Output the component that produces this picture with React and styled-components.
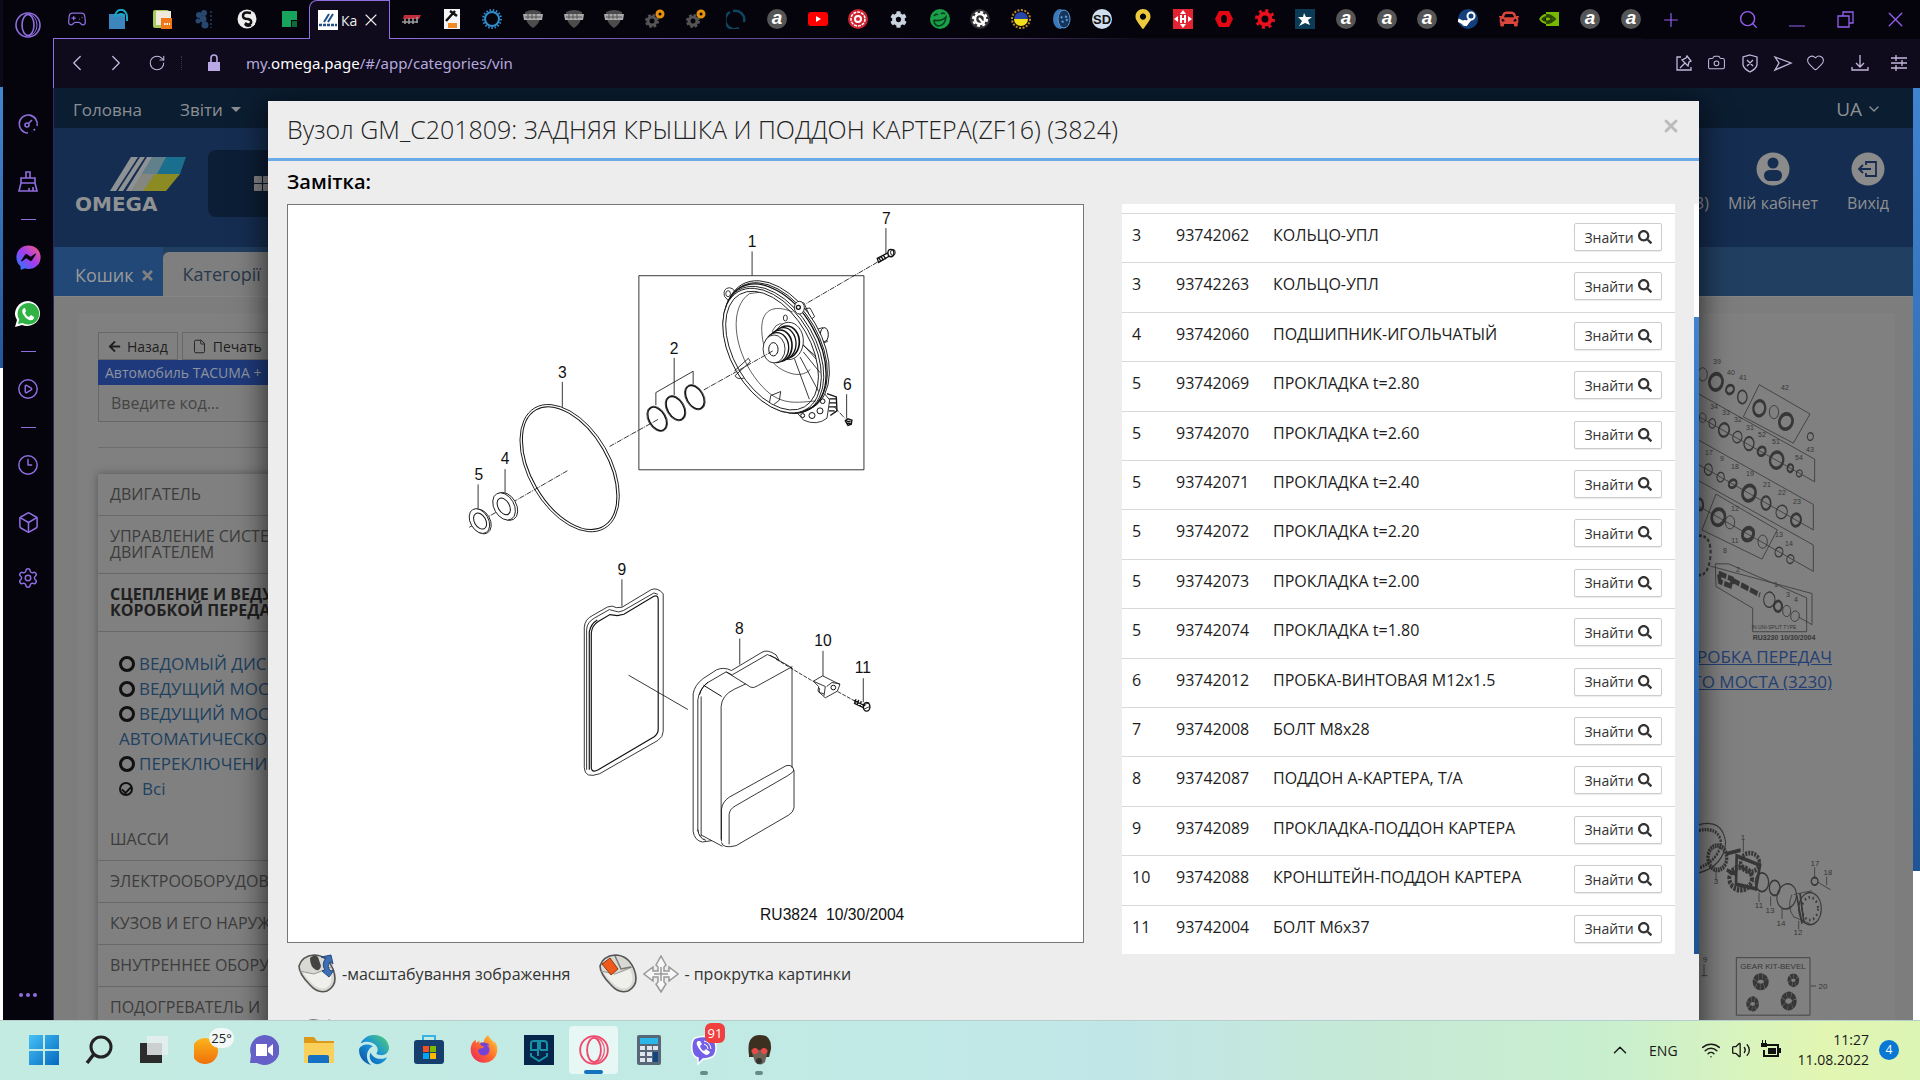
import styled, { createGlobalStyle, css } from "styled-components";
import {
  Box,
  Camera,
  ChevronDown,
  ChevronLeft,
  ChevronRight,
  ChevronUp,
  Clock3,
  File,
  Gamepad2,
  Heart,
  Plus,
  RotateCw,
  Search,
  Settings,
  CirclePlay,
  Volume2,
  Wifi,
  X,
} from "lucide-react";
import {
  FaArrowLeft,
  FaCar,
  FaCog,
  FaFacebookMessenger,
  FaMapMarkerAlt,
  FaSearch,
  FaThLarge,
  FaTimes,
} from "react-icons/fa";
import { FaEdge, FaFirefoxBrowser } from "react-icons/fa6";

const purple = "#8f6ee0";

const GlobalStyle = createGlobalStyle`
  * {
    box-sizing: border-box;
  }

  body {
    margin: 0;
    overflow: hidden;
    font-family: "Open Sans", "Noto Sans", sans-serif;
    font-size: 16px;
    background: #05030c;
  }

  button, input {
    font-family: inherit;
  }

  button {
    margin: 0;
    padding: 0;
    border: 0;
    background: none;
    color: inherit;
  }

  svg {
    display: block;
    flex: none;
  }
`;

const Desktop = styled.div`
  height: 100vh;
  display: flex;
  flex-direction: column;
`;

const Browser = styled.div`
  flex: 1;
  min-height: 0;
  display: flex;
`;

const DesktopEdge = styled.div`
  width: 3px;
  background: linear-gradient(#0b0a18 87px, #4187d0 87px, #23569a 368px, #fff 368px);
`;

const SideBar = styled.nav`
  width: 50px;
  display: flex;
  flex-direction: column;
  align-items: center;
  background: #05030c;
  color: ${purple};
`;

const SideItem = styled.button`
  height: ${(p) => p.$h || 58}px;
  width: 50px;
  display: flex;
  align-items: center;
  justify-content: center;
`;

const SideGap = styled.div`
  height: 45px;
`;

const SideDash = styled.div`
  height: 18px;
  width: 15px;
  display: flex;
  align-items: center;

  &::before {
    content: "";
    flex: 1;
    height: 1px;
    background: ${purple};
  }
`;

const SideDots = styled.button`
  margin-top: auto;
  height: 50px;
  display: flex;
  align-items: center;
  gap: 3px;

  i {
    width: 4px;
    height: 4px;
    border-radius: 50%;
    background: ${purple};
  }
`;

const Main = styled.div`
  flex: 1;
  min-width: 0;
  display: flex;
  flex-direction: column;
`;

const TabStrip = styled.div`
  height: 39px;
  display: flex;
  align-items: stretch;
  background: #05030c;
`;

const TabGroup = styled.div`
  display: flex;
  align-items: center;
  justify-content: space-between;
  border-bottom: 1px solid ${purple};
  ${(p) =>
    p.$grow
      ? css`
          flex: 1;
          padding: 0 0 0 10px;
          border-image: linear-gradient(90deg, ${purple}, #43345c 50%, #0d0a18 60%) 1;
        `
      : css`
          width: 256px;
          padding: 0 9px 0 13px;
        `}
`;

const Favicon = styled.button`
  width: 22px;
  height: 26px;
  display: flex;
  align-items: center;
  justify-content: center;
  color: ${purple};
`;

const ActiveTab = styled.div`
  width: 81px;
  display: flex;
  align-items: center;
  padding-left: 8px;
  gap: 3px;
  border: 1px solid ${purple};
  border-bottom: 0;
  border-top-left-radius: 8px;
  background: #0f0b1c;
  color: #eee;
  font-size: 14px;
`;

const TabTitle = styled.span`
  width: 17px;
`;

const WindowButtons = styled.div`
  width: 278px;
  display: flex;
  align-items: center;
  color: #9560f0;
  padding-left: 17px;
`;

const WindowButton = styled.button`
  width: 50px;
  display: flex;
  justify-content: center;
  &:first-child {
    width: 24px;
    margin-right: 41px;
  }
`;

const AddressBar = styled.div`
  height: 49px;
  display: flex;
  align-items: center;
  padding: 0 10px 2px 14px;
  background: #0f0b1c;
  border-left: 1px solid ${purple};
  color: #c3b9dd;
`;

const BarButton = styled.button`
  width: ${(p) => p.$w || 33}px;
  display: flex;
  justify-content: center;
`;

const BarDivider = styled.div`
  width: 14px;
  height: 14px;
  border-right: 1px dotted #3a3350;
`;

const Url = styled.div`
  flex: 1;
  font-family: "Noto Sans", sans-serif;
  font-size: 15px;
  color: #b6a9dd;

  b {
    font-weight: 400;
    color: #fff;
  }
`;

const Viewport = styled.div`
  position: relative;
  flex: 1;
  min-height: 0;
  display: flex;
  overflow: hidden;
  border-left: 1px solid #35255e;
`;

const Page = styled.div`
  flex: 1;
  min-width: 0;
  background: #7d7d7d;
`;

const PageScroll = styled.div`
  width: 7px;
  background: linear-gradient(#4083cf, #1f5597 84%, #fff 84%);
`;

const TopNav = styled.nav`
  height: 40px;
  display: flex;
  align-items: center;
  gap: 38px;
  padding: 2px 31px 0 19px;
  background: #0b1d31;
  color: #8b8f94;
  font-size: 17px;

  a {
    display: flex;
    align-items: center;
    gap: 8px;
    color: inherit;
    text-decoration: none;
  }
`;

const Language = styled.a`
  && {
    margin-left: auto;
    gap: 4px;
    font-size: 19px;
  }
`;

const Caret = styled.i`
  border: 5px solid transparent;
  border-top-color: currentColor;
  border-bottom: 0;
`;

const Header = styled.header`
  height: 119px;
  display: flex;
  align-items: flex-start;
  padding: 22px 14px 0 21px;
  background: #152d50;
  color: #909090;
`;

const Logo = styled.a`
  padding-top: 6px;
`;

const CatalogButton = styled.button`
  width: 200px;
  height: 67px;
  margin-left: 20px;
  padding-left: 46px;
  border-radius: 8px;
  background: #0c1e36;
  color: #858585;
`;

const HeaderLinks = styled.div`
  margin-left: auto;
  display: flex;
  gap: 19px;
`;

const HeaderLink = styled.a`
  min-width: 62px;
  display: flex;
  flex-direction: column;
  align-items: center;
  gap: 6px;
  padding-top: 2px;
  color: inherit;
  font-size: 16px;
  text-decoration: none;
`;

const PageTabs = styled.div`
  height: 50px;
  display: flex;
  align-items: flex-end;
  background: #213f61;
  border-bottom: 1px solid #858585;
`;

const PageTab = styled.a`
  height: ${(p) => (p.$active ? 44 : 49)}px;
  display: flex;
  align-items: center;
  gap: 6px;
  padding: ${(p) => (p.$active ? "0 20px" : "7px 8px 0 21px")};
  border-top-left-radius: ${(p) => (p.$active ? 6 : 0)}px;
  background: ${(p) => (p.$active ? "#7f7f7f" : "#214876")};
  color: ${(p) => (p.$active ? "#29384b" : "#9a9a9a")};
  font-size: 18px;
  text-decoration: none;

  svg {
    color: #808080;
  }
`;

const PageBody = styled.div`
  height: 1000px;
  display: flex;
  justify-content: space-between;
  margin: 16px 18px 0 24px;
  padding: 19px 0 0 20px;
  background: #808080;
`;

const Filters = styled.aside`
  width: 300px;
`;

const FilterButtons = styled.div`
  display: flex;
  gap: 4px;
`;

const SmallButton = styled.button`
  height: 28px;
  display: flex;
  align-items: center;
  gap: 6px;
  padding: 0 9px;
  border: 1px solid #676767;
  color: #202020;
  font-size: 14px;
`;

const CarBadge = styled.div`
  height: 25px;
  padding: 0 7px;
  background: #1f3a7c;
  color: #8d939f;
  font-size: 14px;
  line-height: 25px;
  white-space: nowrap;
`;

const CodeInput = styled.input`
  width: 100%;
  height: 37px;
  display: block;
  padding: 0 12px;
  border: 1px solid #676767;
  border-top: 0;
  background: #7f7f7f;
  font-size: 16px;

  &::placeholder {
    color: #444;
  }
`;

const Rule = styled.hr`
  margin: 25px 0 26px;
  border: 0;
  border-top: 1px solid #6d6d6d;
`;

const Accordion = styled.div`
  box-shadow: 0 0 8px rgba(0, 0, 0, 0.35);
  background: #808080;
`;

const AccordionItem = styled.button`
  width: 100%;
  display: block;
  padding: 12px 12px 13px;
  border-bottom: 1px solid #686868;
  color: ${(p) => (p.$open ? "#202020" : "#3c3c3c")};
  font-size: 16px;
  font-weight: ${(p) => (p.$open ? 700 : 400)};
  line-height: 16px;
  text-align: left;
  white-space: pre;
`;

const SubList = styled.div`
  height: 187px;
  padding: 19px 0 0 21px;
`;

const SubItem = styled.label`
  display: block;
  color: #20405f;
  font-size: 17px;
  line-height: 25px;
  white-space: pre;
`;

const Radio = styled.input`
  appearance: none;
  width: 16px;
  height: 16px;
  margin: 0 4px 0 0;
  border: 3px solid #111;
  border-radius: 50%;
  vertical-align: -2px;

  &:checked {
    width: 14px;
    height: 14px;
    margin-right: 9px;
    border-width: 2px;
    vertical-align: -1px;
  }

  &:checked::after {
    content: "";
    display: block;
    width: 7px;
    height: 4px;
    margin: 2px 1px;
    border-left: 2px solid #111;
    border-bottom: 2px solid #111;
    transform: rotate(-45deg);
  }
`;

const Gallery = styled.div`
  width: 400px;
  padding: 15px 63px 0 0;
  display: flex;
  flex-direction: column;
  align-items: flex-end;
  gap: 110px;
`;

const NodeCard = styled.a`
  display: flex;
  flex-direction: column;
  align-items: flex-end;
  color: #243f73;
  font-size: 17px;
  line-height: 25px;
  text-align: right;

  svg {
    color: #2b2b2b;
    opacity: 0.85;
  }
`;

const Modal = styled.section`
  position: absolute;
  top: 13px;
  left: 214px;
  right: 221px;
  bottom: 0;
  overflow: hidden;
  display: flex;
  flex-direction: column;
  background: #ededed;
`;

const ModalShade = styled.div`
  position: absolute;
  top: 13px;
  left: 214px;
  right: 221px;
  bottom: -40px;
  box-shadow: 0 5px 30px rgba(0, 0, 0, 0.75);
`;

const ModalHeader = styled.header`
  flex: none;
  height: 60px;
  display: flex;
  justify-content: space-between;
  padding: 11px 18px 0 19px;
  border-bottom: 3px solid #6aaae8;
`;

const ModalTitle = styled.h2`
  margin: 0;
  color: #222;
  font-size: 25px;
  font-weight: 300;
  line-height: 35px;
`;

const CloseButton = styled.button`
  height: 28px;
  color: #bbb;
`;

const ModalBody = styled.div`
  flex: 1;
  display: grid;
  grid-template-columns: 797px 1fr;
  gap: 0 38px;
  align-content: start;
  padding: 7px 0 0 19px;
`;

const Note = styled.strong`
  grid-column: 1 / -1;
  height: 36px;
  font-size: 20px;
  font-weight: 600;
  line-height: 28px;
`;

const Drawing = styled.div`
  height: 739px;
  border: 1px solid #777;
  background: #fff;
`;

const PartsPane = styled.div`
  height: 750px;
  display: flex;
  align-items: flex-end;
  justify-content: space-between;
`;

const PartsScroll = styled.div`
  width: 5px;
  height: 100%;
  background: linear-gradient(#fff 113px, #4083cf 113px, #1d5294);
`;

const PartsList = styled.div`
  flex: 1;
  margin-right: 19px;
  padding-top: 9px;
  background: #fff;
`;

const PartsTable = styled.table`
  width: 100%;
  height: 741px;
  border-collapse: collapse;
  color: #1d1d1d;

  td {
    padding: 9px 0 0 10px;
    border-top: 1px solid #d8d8d8;
    font-size: 16px;
    line-height: 24px;
    vertical-align: top;
  }

  td:nth-child(1) {
    width: 44px;
  }

  td:nth-child(2) {
    width: 97px;
  }

  td:last-child {
    width: 111px;
  }
`;

const FindButton = styled.button`
  width: 88px;
  height: 28px;
  display: flex;
  align-items: center;
  justify-content: center;
  gap: 4px;
  border: 1px solid #ccc;
  border-radius: 2px;
  background: #fff;
  color: #333;
  font-size: 14px;
  box-shadow: 0 1px 1px rgba(0, 0, 0, 0.08);
`;

const Hints = styled.div`
  grid-column: 1 / -1;
  display: flex;
  align-items: center;
  padding: 0 0 1px 11px;
  color: #333;
  font-size: 16px;
`;

const Hint = styled.div`
  display: flex;
  align-items: center;
  gap: 5px;
  margin-right: 29px;
  line-height: 22px;
`;

const HintRow = styled.div`
  grid-column: 1 / -1;
  padding: 24px 0 0 10px;
`;

const TaskBar = styled.footer`
  height: 60px;
  display: flex;
  align-items: center;
  padding: 0 21px 1px 19px;
  border-top: 1px solid #b4cfcc;
  background: linear-gradient(
    90deg,
    #c4ebe1,
    #c1eae6 45%,
    #c1e6e8 58%,
    #c6e9d5 72%,
    #c9efcf 84%,
    #e2f6b2 95%,
    #dcf4b4
  );
  color: #1a1a1a;
`;

const TaskButton = styled.button`
  position: relative;
  width: 49px;
  height: 48px;
  margin-right: 6px;
  display: flex;
  align-items: center;
  justify-content: center;
  border-radius: 4px;
  background: ${(p) => (p.$active ? "rgba(255, 255, 255, .6)" : "none")};

  &::after {
    content: "";
    position: absolute;
    bottom: ${(p) => (p.$active ? 0 : -1)}px;
    width: ${(p) => (p.$active ? 19 : p.$running ? 8 : 0)}px;
    height: 4px;
    border-radius: 2px;
    background: ${(p) => (p.$active ? "#1572bd" : "#668b88")};
  }
`;

const TaskBadge = styled.span`
  position: absolute;
  top: ${(p) => (p.$red ? -3 : 2)}px;
  right: ${(p) => (p.$red ? 3 : -1)}px;
  width: ${(p) => (p.$red ? 20 : 25)}px;
  height: 20px;
  border-radius: ${(p) => (p.$red ? 6 : 10)}px;
  background: ${(p) => (p.$red ? "#f04040" : "#f2f8f7")};
  color: ${(p) => (p.$red ? "#fff" : "#222")};
  font-size: 13px;
  line-height: 20px;
`;

const Tray = styled.div`
  margin-left: auto;
  display: flex;
  align-items: center;
  gap: 10px;
  font-size: 14px;
`;

const Lang = styled.span`
  margin: 0 13px 0 8px;
`;

const ClockText = styled.div`
  margin-left: 7px;
  line-height: 20px;
  text-align: right;
`;

const Count = styled.span`
  width: 20px;
  height: 20px;
  border-radius: 50%;
  background: #0878d4;
  color: #fff;
  font-size: 12px;
  line-height: 20px;
  text-align: center;
`;

const Defs = styled.svg`
  position: absolute;
`;

const parts = [
  [3, "93742062", "КОЛЬЦО-УПЛ"],
  [3, "93742263", "КОЛЬЦО-УПЛ"],
  [4, "93742060", "ПОДШИПНИК-ИГОЛЬЧАТЫЙ"],
  [5, "93742069", "ПРОКЛАДКА t=2.80"],
  [5, "93742070", "ПРОКЛАДКА t=2.60"],
  [5, "93742071", "ПРОКЛАДКА t=2.40"],
  [5, "93742072", "ПРОКЛАДКА t=2.20"],
  [5, "93742073", "ПРОКЛАДКА t=2.00"],
  [5, "93742074", "ПРОКЛАДКА t=1.80"],
  [6, "93742012", "ПРОБКА-ВИНТОВАЯ M12x1.5"],
  [7, "93742008", "БОЛТ M8x28"],
  [8, "93742087", "ПОДДОН А-КАРТЕРА, Т/А"],
  [9, "93742089", "ПРОКЛАДКА-ПОДДОН КАРТЕРА"],
  [10, "93742088", "КРОНШТЕЙН-ПОДДОН КАРТЕРА"],
  [11, "93742004", "БОЛТ M6x37"],
];

const OperaIcon = ({ size = 26, color = purple }) => (
  <svg width={size} height={size} viewBox="0 0 26 26" fill="none" stroke={color}>
    <ellipse cx="13" cy="13" rx="12" ry="12" strokeWidth="1.6" />
    <ellipse cx="13" cy="13" rx="6" ry="10.5" strokeWidth="1.6" />
    <path d="M14 2.5a8 10.500 0 0 1 0 21" />
  </svg>
);

const GaugeIcon = () => (
  <svg width="22" height="22" viewBox="0 0 22 22" fill="none" stroke={purple} strokeWidth="1.6">
    <path d="M11 20A9 9 0 1 1 20 13" />
    <path d="M18 16l-3 3" strokeDasharray="2 2" />
    <circle cx="10" cy="12" r="2" />
    <path d="M11 11l4-4" />
  </svg>
);

const BroomIcon = () => (
  <svg width="22" height="22" viewBox="0 0 22 22" fill="none" stroke={purple} strokeWidth="1.6">
    <path d="M9 7V1h4v6M4 7h14v5H4zM4 12l-2 8h18l-2-8M12 20v-3M16 20v-4" />
  </svg>
);

const WhatsAppIcon = () => (
  <svg width="26" height="26" viewBox="0 0 26 26">
    <path d="M13 0a13 12.500 0 1 1-6 24L0 26l2-7A13 12.500 0 0 1 13 0z" fill="#fff" />
    <path d="M13 2a11 10.800 0 1 1-5.500 20L3 23l1.200-4.500A11 10.800 0 0 1 13 2z" fill="#2fb344" />
    <path d="M9 7q-3 2-1 6t6 6q4 1 5-2v-1l-3-2-2 2q-3-1-4-4l1-2-1-3z" fill="#fff" />
  </svg>
);

const ViberIcon = () => (
  <svg width="28" height="30" viewBox="0 0 28 30">
    <path d="M5 3Q14 0 22 3q4 3 4 10t-4 9q-4 2-9 2l-5 5v-6q-5-1-6-8Q1 6 5 3z" fill="#7360e8" stroke="#fff" strokeWidth="1.5" />
    <path d="M8 6q-2 1-1 4 3 7 9 10 3 0 4-3l-4-3-2 2q-3-1-4-5l2-2-2-3z" fill="#fff" />
    <path d="M14 6q6 1 7 8M14 9q4 1 4 5" fill="none" stroke="#fff" />
  </svg>
);

const GearDuo = () => (
  <svg width="20" height="20" viewBox="0 0 20 20">
    <circle cx="7" cy="12" r="4" fill="none" stroke="#555" strokeWidth="3" />
    <circle cx="7" cy="12" r="6" fill="none" stroke="#555" strokeWidth="2" strokeDasharray="2.7 2" />
    <circle cx="15" cy="5" r="3" fill="none" stroke="#e8920c" strokeWidth="3" />
  </svg>
);

const Shield = () => (
  <svg width="20" height="20" viewBox="0 0 20 20">
    <path d="M2 3q8-4 16 0c0 8-3 13-8 16C5 16 2 11 2 3z" fill="#4c4c4c" />
    <path d="M0 5h20l-1 6H1z" fill="#aaa" />
    <path d="M2 8h16M5 5v5M9 5v5M13 5v5" stroke="#555" />
  </svg>
);

const LetterBall = ({ bg = "#555", color = "#fff", text = "a", italic = true }) => (
  <svg width="20" height="20" viewBox="0 0 20 20">
    <circle cx="10" cy="10" r="10" fill={bg} />
    <text
      x="10"
      y="15"
      textAnchor="middle"
      fontFamily="Liberation Sans, sans-serif"
      fontWeight="700"
      fontStyle={italic ? "italic" : "normal"}
      fontSize={text.length > 1 ? 13 : 19}
      fill={color}
    >
      {text}
    </text>
  </svg>
);

const Svg20 = ({ children }) => (
  <svg width="20" height="20" viewBox="0 0 20 20">
    {children}
  </svg>
);

const leftTabs = [
  <Gamepad2 size={20} strokeWidth={1.5} />,
  <Svg20>
    <path d="M0 5h16v15H0z" fill="#3c86bd" />
    <path d="M6 8a5 6 0 0 1 12 0v4M9 8a3 3 0 0 1 6 0" fill="none" stroke="#19a7c9" strokeWidth="2" />
  </Svg20>,
  <Svg20>
    <rect x="1" y="1" width="16" height="18" rx="2" fill="#a5c95a" />
    <rect x="4" y="2" width="15" height="14" fill="#efeadc" />
    <path d="M9 9h11v11H9z" fill="#f07818" />
    <path d="M12 15h6" stroke="#fff" strokeWidth="2" strokeDasharray="1.5 1" />
  </Svg20>,
  <Svg20>
    <g fill="#26486f">
      <circle cx="5" cy="6" r="3" />
      <circle cx="10" cy="4" r="3" />
      <circle cx="4" cy="12" r="2.5" />
      <circle cx="9" cy="10" r="3.5" />
      <circle cx="11" cy="16" r="3.5" />
    </g>
    <path d="M17 2v17" stroke="#1b314e" strokeWidth="2" strokeDasharray="2 2" />
  </Svg20>,
  <Svg20>
    <circle cx="10" cy="10" r="9.5" fill="#eee" />
    <path d="M14 4Q6 2 6 7q0 3 5 3 4 1 3 4-2 3-6 0M8 15q2 3 6 1" fill="none" stroke="#111" strokeWidth="2.5" />
  </Svg20>,
  <Svg20>
    <path d="M3 2h15v9h-6v7H3z" fill="#17a45c" />
    <path d="M13 12h5v6h-5z" fill="#0a6e3a" />
  </Svg20>,
];

const aBall = <LetterBall />;
const tabs = [
  <Svg20>
    <path d="M3 6h17l-2 4H2z" fill="#c52c3c" />
    <path d="M1 13h16M4 10v5M8 9v6M12 9v6M16 8v6" stroke="#999" strokeWidth="1.6" />
  </Svg20>,
  <Svg20>
    <path d="M2 0h16v20H2z" fill="#f5f5f5" />
    <path d="M4 12l9-10M8 2l7 5" stroke="#111" strokeWidth="2.500" />
    <path d="M6 14h9v5H6z" fill="#f08a24" />
  </Svg20>,
  <Svg20>
    <circle cx="10" cy="10" r="7" fill="none" stroke="#2f8fd0" strokeWidth="2" />
    <circle cx="10" cy="10" r="9" fill="none" stroke="#2f8fd0" strokeWidth="2" strokeDasharray="1.5 1.8" />
  </Svg20>,
  <Shield />,
  <Shield />,
  <Shield />,
  <GearDuo />,
  <GearDuo />,
  <Svg20>
    <path d="M4 3a9 9 0 0 0 9 16M7 2a9 9 0 0 1 11 11" fill="none" stroke="#0e4561" strokeWidth="2.5" />
  </Svg20>,
  aBall,
  <Svg20>
    <rect y="3" width="20" height="14" rx="3" fill="#f00" />
    <path d="M8 7l5 3-5 3z" fill="#fff" />
  </Svg20>,
  <Svg20>
    <circle cx="10" cy="10" r="10" fill="#cf2432" />
    <circle cx="10" cy="10" r="7" fill="none" stroke="#fff" strokeWidth="1.5" strokeDasharray="3 1" />
    <circle cx="10" cy="10" r="3" fill="none" stroke="#fff" strokeWidth="2" />
  </Svg20>,
  <FaCog size={17} color="#c9d3de" />,
  <Svg20>
    <circle cx="10" cy="10" r="10" fill="#1ba04a" />
    <path d="M4 11q7 2 12-3-1 9-8 9-4-1-4-6M4 7q2-3 4-1M11 5q2-2 4 0" fill="none" stroke="#063c18" strokeWidth="1.6" />
  </Svg20>,
  <Svg20>
    <circle cx="10" cy="10" r="10" fill="#333" />
    <circle cx="10" cy="10" r="5" fill="none" stroke="#fff" strokeWidth="2.500" />
    <circle cx="10" cy="10" r="7" fill="none" stroke="#fff" strokeWidth="2" strokeDasharray="3 2.500" />
    <path d="M9 9l5 6" stroke="#fff" strokeWidth="2" />
  </Svg20>,
  <Svg20>
    <circle cx="10" cy="10" r="9" fill="none" stroke="#b88a2c" strokeWidth="2" strokeDasharray="2 1.5" />
    <path d="M3 10a7 7 0 0 1 14 0z" fill="#2846a8" />
    <path d="M3 10a7 7 0 0 0 14 0z" fill="#f3de1c" />
  </Svg20>,
  <Svg20>
    <ellipse cx="8" cy="10" rx="7" ry="10" fill="#3c79b8" />
    <ellipse cx="12" cy="10" rx="6" ry="9" fill="#15355d" stroke="#5d9bd6" />
    <circle cx="12" cy="10" r="3" fill="none" stroke="#5d9bd6" strokeWidth="2" strokeDasharray="2 3" />
  </Svg20>,
  <LetterBall bg="#cfdff0" color="#111" text="SD" italic={false} />,
  <FaMapMarkerAlt size={20} color="#edc93c" />,
  <Svg20>
    <path d="M0 0h20v20H0z" fill="#e42332" />
    <path d="M10 1l3 4H7zM10 19l3-4H7zM1 10l4-3v6zM19 10l-4-3v6zM7 6h2v3h2V6h2v8h-2v-3H9v3H7z" fill="#fff" />
  </Svg20>,
  <Svg20>
    <path d="M5 2h10l4 8-4 8H5l-4-8z" fill="#e30613" />
    <ellipse cx="10" cy="10" rx="3" ry="4" fill="#05030c" />
  </Svg20>,
  <Svg20>
    <circle cx="10" cy="10" r="5.5" fill="none" stroke="#e8101c" strokeWidth="4" />
    <circle cx="10" cy="10" r="8.5" fill="none" stroke="#e8101c" strokeWidth="3" strokeDasharray="3 3.7" />
  </Svg20>,
  <Svg20>
    <path d="M0 0h20v20H0z" fill="#0c3b55" />
    <path d="M9 4l2 4 6 0-4 3 2 5-5-2-6 3 3-5-4-4 5 0z" fill="#fff" />
  </Svg20>,
  aBall,
  aBall,
  aBall,
  <Svg20>
    <circle cx="10" cy="10" r="10" fill="#13407c" />
    <path d="M0 11l8 4 5-6" stroke="#fff" strokeWidth="3.500" fill="none" />
    <circle cx="13" cy="7" r="3.500" fill="#13407c" stroke="#fff" strokeWidth="2" />
    <circle cx="7" cy="14" r="3" fill="#fff" />
  </Svg20>,
  <FaCar size={20} color="#d9443c" />,
  <Svg20>
    <path d="M7 3h13v14H7z" fill="#76b900" />
    <path d="M1 10q7-8 15 0-8 8-15 0zM4 10q5-5 9 0-5 5-9 0z" fill="none" stroke="#2b4500" strokeWidth="1.8" />
    <path d="M1 10q3-4 6-4M1 10q3 4 6 4" fill="none" stroke="#76b900" strokeWidth="1.8" />
  </Svg20>,
  aBall,
  aBall,
];

const OmegaLogo = () => (
  <svg width="113" height="58" viewBox="0 0 113 58">
    <path d="M56 1h7L41 35h-6zM65 1h5L48 35h-5z" fill="#8f9294" />
    <path d="M74 1h37l-6 17H64z" fill="#1a6e8e" />
    <path d="M74 1h17l-9 17H64z" fill="#62808c" />
    <path d="M64 18h41L91 35H53z" fill="#8c8a22" />
    <path d="M64 18h16L68 35H53z" fill="#84877f" />
    <path d="M72 1h5L56 35h-5z" fill="#8f9294" />
    <text x="0" y="55" fontFamily="DejaVu Sans, sans-serif" fontWeight="700" fontSize="20" fill="#8f9294">
      OMEGA
    </text>
  </svg>
);

// Tilted ring shared by gaskets and washers of the exploded view
const Ring = ({ x, y, a, b, ...rest }) => (
  <ellipse rx={a} ry={b} transform={`translate(${x} ${y}) rotate(60)`} {...rest} />
);

const labels = [
  [938, 200, "1"],
  [704, 520, "2"],
  [368, 592, "3"],
  [196, 852, "4"],
  [117, 900, "5"],
  [1224, 628, "6"],
  [1341, 132, "7"],
];

const lowerLabels = [
  [247, 104, "9"],
  [600, 283, "8"],
  [851, 318, "10"],
  [971, 400, "11"],
];

const PartsDrawing = () => (
  <svg
    width="100%"
    height="100%"
    viewBox="0 0 796 737"
    fontFamily="Liberation Sans, sans-serif"
    fontSize="47"
    textAnchor="middle"
  >
    <g transform="translate(152 -25) scale(.33333)" fill="none" stroke="#111" strokeWidth="2.5">
      <path d="M598 286H1274V869H598zM938 213v73M1340 143v79M704 533v112M368 605v75M196 867v71M115 913v72M1222 642v73" />
      <path d="M649 675v-38l112-64v39" />
      <path
        d="M1315 245L1100 370M793 629l100-56M655 718l-147 82M383 872l-158 91M190 985L88 1042M1185 680l35 38"
        strokeDasharray="16 3 3 3"
      />
      <Ring x={390} y={864} a={209} b={123} />
      <Ring x={390} y={864} a={202} b={115} strokeWidth="3" />
      {[
        [653, 716],
        [708, 684],
        [766, 651],
      ].map(([x, y]) => (
        <g key={x}>
          <Ring x={x} y={y} a={41} b={27} strokeWidth="2" />
          <Ring x={x} y={y} a={38} b={24} strokeWidth="4" />
        </g>
      ))}
      <Ring x={199} y={979} a={45} b={31} fill="#fff" />
      <Ring x={193} y={979} a={44} b={30} fill="#fff" />
      <Ring x={192} y={979} a={27} b={17} strokeWidth="3" />
      <Ring x={123} y={1024} a={40} b={28} fill="#fff" />
      <Ring x={119} y={1023} a={40} b={27} fill="#fff" />
      <Ring x={121} y={1023} a={26} b={17} strokeWidth="3" />

      <path
        d="M875 370l-20-22q-6-24 15-26 12 2 15 10l20 5zM1060 372q14-14 34-4l22 50-10 20zM1098 385l14-2 14 26-14 10zM1130 448l20-6 14 42-20 6"
        fill="#fff"
      />
      <ellipse cx="1155" cy="463" rx="12" ry="21" fill="#fff" strokeWidth="3" />
      <ellipse cx="866" cy="340" rx="7" ry="9" />
      <path d="M1163 640l28 10 2 42-20 14M1170 656h20M1168 668h22M1168 680h22M1168 692h18" strokeWidth="4" />
      <path d="M1075 700l18 20q40 18 70-6l8-55-25-30" fill="#fff" />
      <Ring x={1014} y={497} a={213} b={132} fill="#fff" />
      <Ring x={1011} y={500} a={210} b={129} />
      <Ring x={1007} y={504} a={210} b={129} strokeWidth="4" />
      <Ring x={1002} y={509} a={208} b={127} />
      <Ring x={998} y={511} a={204} b={124} fill="#fff" />
      <Ring x={998} y={511} a={195} b={115} />
      <path d="M930 340C870 380 880 500 945 590S1060 668 1130 662M930 340l28-4" strokeWidth="2" />
      <path
        d="M1060 395C1000 370 965 390 967 450 970 530 1010 570 1065 582q30 4 48-14M1046 440q-28-24-46 10v20"
        strokeWidth="2"
      />
      <path d="M1065 535l45 122M1082 530l56 104M1085 486l45 50M1092 515l50 62M1090 494l40 34" />
      <path d="M885 572l42-38 6 10-46 42q4 12 26 8M990 668l4-22 30-12-4 26-16 12" />
      <ellipse cx="1038" cy="413" rx="6" ry="9" />
      <ellipse cx="1048" cy="482" rx="44" ry="56" fill="#fff" />
      <ellipse cx="1042" cy="485" rx="38" ry="48" fill="#fff" strokeWidth="5" />
      <ellipse cx="1032" cy="490" rx="38" ry="48" fill="#fff" strokeWidth="4" />
      <ellipse cx="1022" cy="496" rx="36" ry="47" fill="#fff" strokeWidth="5" />
      <ellipse cx="1012" cy="502" rx="36" ry="45" fill="#fff" strokeWidth="4" />
      <ellipse cx="1004" cy="506" rx="33" ry="42" fill="#fff" />
      <ellipse cx="1002" cy="507" rx="14" ry="20" strokeWidth="3" />
      <path d="M1000 512L893 573" strokeDasharray="16 3 3 3" />
      <ellipse cx="1080" cy="382" rx="15" ry="19" fill="#fff" />
      <circle cx="1077" cy="381" r="6" strokeWidth="4" />
      <g strokeWidth="3">
        <circle cx="1150" cy="663" r="7" />
        <circle cx="1142" cy="692" r="9" />
        <circle cx="1118" cy="706" r="9" />
        <circle cx="1090" cy="706" r="6" />
      </g>
      <path d="M1314 234l34-18 4 10-34 20zM1318 232l8 12M1325 228l8 12M1332 224l8 12" strokeWidth="4" />
      <ellipse cx="1355" cy="218" rx="9" ry="11" strokeWidth="4" fill="#fff" />
      <ellipse cx="1361" cy="216" rx="7" ry="9" strokeWidth="3" />
      <path d="M1218 722l8-6 12 4-2 12-10 4zM1222 724h12M1224 730h10" strokeWidth="4" />
      <g fill="#111" stroke="none">
        {labels.map(([x, y, t]) => (
          <text key={t} x={x} y={y}>
            {t}
          </text>
        ))}
      </g>
    </g>
    <g transform="translate(252 335) scale(.33333)" fill="none" stroke="#111" strokeWidth="2.5">
      <path d="M247 118v82M601 296v78M851 333v76M972 415v72M267 406l178 103" />
      <path d="M134 262Q135 238 160 226l44-25q15-6 26 2l17-1 88-53q18-8 36 12v414q0 16-16 27L180 702q-45 16-46-18z" />
      <path d="M141 690V268q2-22 24-34l44-25 28 7 14-4 92-53 12 4" />
      <path
        d="M155 686V280q2-24 22-36l34-20 22 3 20-4 90-54q13-5 13 10v390q0 12-12 22L176 690q-18 10-21-4zM149 690V276q4-24 24-36"
        strokeWidth="3.5"
      />
      <path d="M461 875V462q4-26 30-46l40-26q22-10 45 2l92-55q16-10 42 8l9 16" />
      <path d="M475 875V480q4-32 30-52l55-32 20 10M485 890V470M580 404l104-60 28 12M461 875q4 28 28 32l28-4" />
      <path d="M480 465q6-24 26-38M475 870q3 26 24 32M492 436l55 34" strokeWidth="3" />
      <path d="M485 886l64 34M560 396l74 46q8 4 20-4l105-58M692 346l66 38v300M545 900V500q2-34 40-52l34-16" />
      <path d="M546 905V810q2-24 24-38l170-94q20-6 24 16v110q-2 14-16 22L590 918q-40 10-44-10" />
      <path d="M569 914V824q2-16 18-25l156-90q18-10 21-18" />
      <path d="M710 358L822 425M895 455l54 30" strokeDasharray="12 4" />
      <path
        d="M822 424l28-16 52 26-8 20-36 20-22-20 2-14zM822 424l36 16-4 28M862 440l16-12 24 4M840 444v14l14 4"
        fill="#fff"
      />
      <circle cx="882" cy="443" r="7" strokeWidth="3" />
      <path d="M944 482l34 16M944 490l30 14M950 478l-4 14M958 480l-4 16M966 484l-4 16" strokeWidth="4" />
      <ellipse cx="982" cy="501" rx="10" ry="13" strokeWidth="4" />
      <path d="M972 496l18-8M974 508l18-8" />
      <g fill="#111" stroke="none">
        {lowerLabels.map(([x, y, t]) => (
          <text key={t} x={x} y={y}>
            {t}
          </text>
        ))}
        <text x="662" y="1140" textAnchor="start" style={{ whiteSpace: "pre" }}>
          {"RU3824  10/30/2004"}
        </text>
      </g>
    </g>
  </svg>
);

// [x, y, rx, ry, stroke]
const gears = [
  [68, 158, 14, 14, 2],
  [108, 174, 20, 17, 8],
  [150, 190, 12, 9, 6],
  [187, 206, 14, 14, 4],
  [238, 230, 18, 16, 7],
  [282, 238, 14, 14, 2],
  [318, 258, 20, 16, 8],
  [391, 290, 9, 8, 3],
  [68, 250, 10, 10, 2],
  [97, 262, 10, 10, 3],
  [132, 276, 16, 14, 5],
  [172, 291, 14, 12, 3],
  [207, 305, 15, 14, 4],
  [245, 321, 12, 9, 6],
  [290, 340, 20, 17, 7],
  [331, 357, 9, 8, 5],
  [358, 368, 9, 7, 3],
  [85, 360, 12, 12, 3],
  [122, 376, 11, 10, 3],
  [158, 390, 12, 8, 6],
  [207, 410, 20, 16, 8],
  [258, 431, 14, 14, 5],
  [305, 450, 17, 14, 3],
  [348, 467, 15, 13, 6],
  [60, 434, 9, 12, 6],
  [115, 461, 20, 17, 8],
  [150, 472, 14, 14, 2],
  [204, 497, 17, 13, 9],
  [248, 513, 14, 14, 2],
  [297, 535, 12, 10, 3],
  [331, 550, 11, 9, 3],
  [268, 636, 17, 16, 3],
  [294, 650, 12, 11, 6],
  [320, 660, 12, 12, 2],
  [345, 671, 13, 11, 2],
];

const gearLabels = [
  [18, 17, "39"],
  [32, 28, "40"],
  [44, 33, "41"],
  [86, 43, "42"],
  [15, 62, "34"],
  [27, 68, "33"],
  [39, 75, "32"],
  [51, 83, "31"],
  [63, 90, "52"],
  [77, 97, "51"],
  [100, 113, "54"],
  [10, 108, "17"],
  [23, 114, "9"],
  [36, 122, "18"],
  [51, 129, "19"],
  [68, 140, "21"],
  [83, 148, "22"],
  [98, 157, "23"],
  [36, 164, "12"],
  [36, 196, "11"],
  [80, 190, "13"],
  [90, 199, "14"],
  [26, 206, "8"],
  [39, 225, "2"],
  [77, 240, "1"],
  [89, 250, "3"],
  [97, 255, "4"],
  [111, 105, "43"],
];

const GearboxThumb = () => (
  <svg width="133" height="297" viewBox="0 0 133 297" fontFamily="Liberation Sans, sans-serif" fontSize="7">
    <g transform="scale(.3333 .4714) translate(-57 -100)" fill="none" stroke="currentColor" strokeWidth="2">
      <path d="M57 200l347 138v48L57 248M57 298l343 136v54L57 350M57 384l343 136v56L57 438M190 248l48-68 152 62-50 62zM66 488l42-76 184 76-46 62zM92 565l304 58v66l-40-16M106 560l40 0 234 72v72H218v-50l-110-46z" />
      <path d="M57 500q40 0 34 46-6 38-34 38" strokeWidth="6" strokeDasharray="8 5" />
      <path d="M116 580l40 12v16l-36-10zM156 594l84 32" strokeWidth="11" strokeDasharray="24 5" />
      {gears.map(([x, y, rx, ry, w]) => (
        <ellipse key={`${x}-${y}`} cx={x} cy={y} rx={rx} ry={ry} strokeWidth={w} transform={`rotate(-15 ${x} ${y})`} />
      ))}
    </g>
    <g fill="currentColor" textAnchor="middle">
      {gearLabels.map(([x, y, t]) => (
        <text key={`${x}-${y}`} x={x} y={y}>
          {t}
        </text>
      ))}
      <text x="75" y="282" fontSize="5">
        IN UNI-SPLIT TYPE
      </text>
      <text x="85" y="293" fontWeight="700">
        RU3230 10/30/2004
      </text>
    </g>
  </svg>
);

const bevelLabels = [
  [44, 36, "1"],
  [17, 80, "3"],
  [60, 104, "11"],
  [71, 109, "13"],
  [82, 122, "14"],
  [99, 131, "12"],
  [116, 62, "17"],
  [129, 71, "18"],
  [6, 158, "9"],
  [124, 185, "20"],
];

const BevelThumb = () => (
  <svg width="133" height="215" viewBox="0 0 133 215" fontFamily="Liberation Sans, sans-serif" fontSize="8">
    <g transform="scale(.3333 .4714) translate(-57 -1070)" fill="none" stroke="currentColor" strokeWidth="2">
      <path d="M57 1114q70-14 80 38-6 50-80 64" strokeWidth="3" />
      <path d="M57 1126q60-8 66 26-6 36-66 54" strokeWidth="7" strokeDasharray="5 3" />
      <path d="M190 1146v26M404 1204v24M440 1224v18M108 1210v22M237 1258v20M272 1266v20M306 1292v22M356 1318v18M414 1236l38 16M392 1456h16" />
      <ellipse cx="112" cy="1184" rx="28" ry="26" strokeWidth="10" strokeDasharray="5 2" />
      <path d="M138 1176l44-8M140 1210l30 10M170 1180l70 20-12 50-60-10z" strokeWidth="8" />
      <ellipse cx="210" cy="1194" rx="28" ry="20" strokeWidth="10" strokeDasharray="6 3" />
      <ellipse cx="182" cy="1228" rx="34" ry="24" strokeWidth="12" strokeDasharray="7 3" />
      <ellipse cx="246" cy="1236" rx="20" ry="20" strokeWidth="4" />
      <ellipse cx="284" cy="1248" rx="16" ry="16" strokeWidth="4" />
      <ellipse cx="320" cy="1266" rx="30" ry="26" transform="rotate(-25 320 1266)" strokeWidth="3" />
      <path d="M342 1262l54-8M344 1310l46 14M336 1262q-18 28 8 50" />
      <ellipse cx="390" cy="1292" rx="34" ry="34" transform="rotate(-20 390 1292)" strokeWidth="3" />
      <ellipse cx="390" cy="1292" rx="24" ry="24" strokeWidth="6" strokeDasharray="4 8" />
      <path d="M350 1264l16 60M360 1260l12 62" strokeWidth="5" />
      <ellipse cx="404" cy="1234" rx="10" ry="8" strokeWidth="4" />
      <path d="M72 1410v26M64 1434h18M169 1396h221v122H169z" />
      <ellipse cx="242" cy="1447" rx="17" ry="11" strokeWidth="14" strokeDasharray="11 1" />
      <ellipse cx="340" cy="1444" rx="12" ry="9" strokeWidth="11" strokeDasharray="9 1" />
      <ellipse cx="218" cy="1494" rx="13" ry="10" strokeWidth="12" strokeDasharray="9 1" />
      <ellipse cx="326" cy="1488" rx="17" ry="13" strokeWidth="14" strokeDasharray="12 1" />
    </g>
    <g fill="currentColor" textAnchor="middle">
      {bevelLabels.map(([x, y, t]) => (
        <text key={t} x={x} y={y}>
          {t}
        </text>
      ))}
      <text x="74" y="165">
        GEAR KIT-BEVEL
      </text>
    </g>
  </svg>
);

const MouseIcon = ({ left }) => (
  <svg width="39" height="40" viewBox="0 0 39 40">
    <path d="M1 12Q4 2 16 1q13 0 19 14 6 16-6 22-9 3-17-6Q1 20 1 12z" fill="#d9d9d4" stroke="#555" strokeWidth="1.6" />
    <path d="M5 18q10 5 26-3 6 14-3 19-8 2-14-5Q7 23 5 18z" fill="#efefec" />
    <path d="M2 17L16 20 33 13" fill="none" stroke="#999" />
    {left ? (
      <>
        <path d="M3 10l8-6 8 11-7 6z" fill="#ee5a1c" stroke="#923a10" />
        <path d="M16 2l6 13 10-2" fill="none" stroke="#777" strokeWidth="1.5" />
      </>
    ) : (
      <>
        <path d="M12 4q4-4 8-1l3 9q-1 5-5 4-6-3-6-12z" fill="#444" />
        <path d="M23 3l10-2 2 9-3-2q-4 5 1 9l3-1-5 7-7-6 3-1q-4-6 1-12z" fill="#3c6fb5" stroke="#27497c" />
      </>
    )}
  </svg>
);

const MoveIcon = () => (
  <svg width="36" height="38" viewBox="0 0 36 38" fill="#f7f7f7" stroke="#999" strokeWidth="1.5">
    <path d="M18 1l5 9-2 2v4h5v-4l9 7-9 7v-4h-5v5l2 2-5 8-5-8 2-2v-5h-5v4l-9-7 9-7v4h5v-4l-2-2z" />
    <path d="M18 12v14M11 19h14" />
  </svg>
);

const Gradients = () => (
  <Defs width="0" height="0">
    <defs>
      <linearGradient id="edge" x1="0" y1="1" x2="1" y2="0">
        <stop offset="0" stopColor="#0c4a9c" />
        <stop offset=".5" stopColor="#1790d8" />
        <stop offset="1" stopColor="#53d26d" />
      </linearGradient>
      <linearGradient id="fox" x1="0" y1="1" x2="1" y2="0">
        <stop offset="0" stopColor="#e91e63" />
        <stop offset=".5" stopColor="#ff6a2a" />
        <stop offset="1" stopColor="#ffd53a" />
      </linearGradient>
      <linearGradient id="msg" x1="0" y1="1" x2="1" y2="0">
        <stop offset="0" stopColor="#1683ff" />
        <stop offset=".5" stopColor="#a03cf0" />
        <stop offset="1" stopColor="#ff5f74" />
      </linearGradient>
      <linearGradient id="win" x1="0" y1="0" x2="1" y2="1">
        <stop offset="0" stopColor="#45c2f5" />
        <stop offset="1" stopColor="#0568c0" />
      </linearGradient>
      <linearGradient id="sun" x1="0" y1="0" x2="0" y2="1">
        <stop offset="0" stopColor="#fbb51c" />
        <stop offset="1" stopColor="#f07008" />
      </linearGradient>
    </defs>
  </Defs>
);

const Svg30 = ({ children }) => (
  <svg width="30" height="30" viewBox="0 0 30 30">
    {children}
  </svg>
);

const Side = () => (
  <SideBar>
    <SideItem $h={50} aria-label="Opera">
      <OperaIcon />
    </SideItem>
    <SideGap />
    <SideItem aria-label="Speed">
      <GaugeIcon />
    </SideItem>
    <SideItem $h={57} aria-label="Cleaner">
      <BroomIcon />
    </SideItem>
    <SideDash />
    <SideItem aria-label="Messenger">
      <FaFacebookMessenger size={25} fill="url(#msg)" />
    </SideItem>
    <SideItem $h={56} aria-label="WhatsApp">
      <WhatsAppIcon />
    </SideItem>
    <SideDash />
    <SideItem aria-label="Player">
      <CirclePlay size={22} strokeWidth={1.6} />
    </SideItem>
    <SideDash />
    <SideItem aria-label="History">
      <Clock3 size={22} strokeWidth={1.6} />
    </SideItem>
    <SideItem $h={56} aria-label="Extensions">
      <Box size={23} strokeWidth={1.6} />
    </SideItem>
    <SideItem $h={56} aria-label="Settings">
      <Settings size={22} strokeWidth={1.6} />
    </SideItem>
    <SideDots aria-label="More">
      <i />
      <i />
      <i />
    </SideDots>
  </SideBar>
);

const Tabs = () => (
  <TabStrip>
    <TabGroup>
      {leftTabs.map((icon, i) => (
        <Favicon key={i}>{icon}</Favicon>
      ))}
    </TabGroup>
    <ActiveTab>
      <Svg20>
        <path d="M0 0h20v20H0z" fill="#fff" />
        <path d="M6 12l5-8M10 12l5-8" stroke="#234f8a" strokeWidth="2" />
        <path d="M1 15h18" stroke="#234f8a" strokeWidth="2.500" strokeDasharray="3 1" />
      </Svg20>
      <TabTitle>Ка</TabTitle>
      <X size={20} strokeWidth={1.3} />
    </ActiveTab>
    <TabGroup $grow>
      {tabs.map((icon, i) => (
        <Favicon key={i}>{icon}</Favicon>
      ))}
    </TabGroup>
    <WindowButtons>
      <WindowButton aria-label="New tab">
        <Plus size={22} strokeWidth={1.3} />
      </WindowButton>
      <WindowButton aria-label="Search tabs">
        <Search size={21} strokeWidth={1.6} />
      </WindowButton>
      <WindowButton aria-label="Minimize">
        <Svg20>
          <path d="M2 16h16" stroke="currentColor" />
        </Svg20>
      </WindowButton>
      <WindowButton aria-label="Restore">
        <Svg20>
          <path d="M2 6h11v11H2zM7 6V2h10v11h-4" fill="none" stroke="currentColor" strokeWidth="1.3" />
        </Svg20>
      </WindowButton>
      <WindowButton aria-label="Close">
        <X size={25} strokeWidth={1.3} />
      </WindowButton>
    </WindowButtons>
  </TabStrip>
);

const BarIcon = ({ d }) => (
  <svg width="20" height="20" viewBox="0 0 20 20" fill="none" stroke="currentColor" strokeWidth="1.3">
    <path d={d} />
  </svg>
);

const Address = () => (
  <AddressBar>
    <BarButton $w={18} aria-label="Back">
      <ChevronLeft size={26} strokeWidth={1.2} />
    </BarButton>
    <BarButton $w={60} aria-label="Forward">
      <ChevronRight size={26} strokeWidth={1.2} />
    </BarButton>
    <BarButton $w={22} aria-label="Reload">
      <RotateCw size={18} strokeWidth={1.4} />
    </BarButton>
    <BarDivider />
    <BarButton $w={64} aria-label="Site security">
      <svg width="14" height="18" viewBox="0 0 14 18">
        <path d="M1 8h12v9H1z" fill="#b8a8e6" />
        <path d="M4 9V4a3 3 0 0 1 6 0v5" fill="none" stroke="#b8a8e6" strokeWidth="1.6" />
      </svg>
    </BarButton>
    <Url>
      my.<b>omega.page</b>/#/app/categories/vin
    </Url>
    <BarButton aria-label="Pin">
      <BarIcon d="M7 4H3v13h14v-3M13 3l4 5-2 1-1 4-6-6 4-2zM11 10l-5 5" />
    </BarButton>
    <BarButton aria-label="Snapshot">
      <Camera size={19} strokeWidth={1.3} />
    </BarButton>
    <BarButton aria-label="Blocker">
      <BarIcon d="M10 2l7 2v8q-1 4-7 7-6-3-7-7V4zM7 7l6 6M13 7l-6 6" />
    </BarButton>
    <BarButton aria-label="Flow">
      <BarIcon d="M2 4l16 6-16 7 4-7z" />
    </BarButton>
    <BarButton aria-label="Bookmark">
      <Heart size={19} strokeWidth={1.3} />
    </BarButton>
    <BarButton $w={56} aria-label="Downloads">
      <BarIcon d="M10 2v12M6 10l4 4 4-4M2 14v3h16v-3" />
    </BarButton>
    <BarButton $w={22} aria-label="Easy setup">
      <BarIcon d="M2 5h16M2 10h16M2 15h16M7 2v6M13 7v6M7 12v6" />
    </BarButton>
  </AddressBar>
);

const Catalog = () => (
  <Page>
    <TopNav>
      <a href="#home">Головна</a>
      <a href="#reports">
        Звіти <Caret />
      </a>
      <Language href="#lang">
        UA <ChevronDown size={16} />
      </Language>
    </TopNav>
    <Header>
      <Logo href="#main" aria-label="Omega">
        <OmegaLogo />
      </Logo>
      <CatalogButton aria-label="Catalog">
        <FaThLarge size={17} />
      </CatalogButton>
      <HeaderLinks>
        <HeaderLink href="#basket">
          <svg width="34" height="34" viewBox="0 0 34 34">
            <circle cx="17" cy="17" r="16" fill="#8b8b8b" />
          </svg>
          Кошик (3)
        </HeaderLink>
        <HeaderLink href="#account">
          <svg width="34" height="34" viewBox="0 0 34 34">
            <circle cx="17" cy="17" r="16.5" fill="#8b8b8b" />
            <circle cx="17" cy="11" r="5.5" fill="#152d50" />
            <rect x="8" y="18" width="18" height="11" rx="5.5" fill="#152d50" />
          </svg>
          Мій кабінет
        </HeaderLink>
        <HeaderLink href="#logout">
          <svg width="34" height="34" viewBox="0 0 34 34" fill="none" stroke="#152d50" strokeWidth="1.8">
            <circle cx="17" cy="17" r="16.5" fill="#8b8b8b" stroke="none" />
            <path d="M15 13v-3h10v14H15v-3M20 17H8M12 13l-4 4 4 4" />
          </svg>
          Вихід
        </HeaderLink>
      </HeaderLinks>
    </Header>
    <PageTabs>
      <PageTab href="#cart">
        Кошик <FaTimes size={15} />
      </PageTab>
      <PageTab href="#categories" $active>
        Категорії
      </PageTab>
    </PageTabs>
    <PageBody>
      <Filters>
        <FilterButtons>
          <SmallButton>
            <FaArrowLeft size={13} /> Назад
          </SmallButton>
          <SmallButton>
            <File size={15} strokeWidth={1.5} /> Печать
          </SmallButton>
        </FilterButtons>
        <CarBadge>Автомобиль TACUMA +</CarBadge>
        <CodeInput aria-label="Код" placeholder="Введите код..." />
        <Rule />
        <Accordion>
          <AccordionItem>ДВИГАТЕЛЬ</AccordionItem>
          <AccordionItem>{"УПРАВЛЕНИЕ СИСТЕМОЙ\nДВИГАТЕЛЕМ"}</AccordionItem>
          <AccordionItem $open>{"СЦЕПЛЕНИЕ И ВЕДУЩИЙ\nКОРОБКОЙ ПЕРЕДАЧ"}</AccordionItem>
          <SubList>
            {["ВЕДОМЫЙ ДИСК", "ВЕДУЩИЙ МОСТ", "ВЕДУЩИЙ МОСТ\nАВТОМАТИЧЕСКОЙ", "ПЕРЕКЛЮЧЕНИЕ", "Всі"].map((name, i) => (
              <SubItem key={i}>
                <Radio type="radio" name="group" defaultChecked={i === 4} />
                {name}
              </SubItem>
            ))}
          </SubList>
          <AccordionItem>ШАССИ</AccordionItem>
          <AccordionItem>ЭЛЕКТРООБОРУДОВАНИЕ</AccordionItem>
          <AccordionItem>КУЗОВ И ЕГО НАРУЖНЫЕ</AccordionItem>
          <AccordionItem>ВНУТРЕННЕЕ ОБОРУДОВАНИЕ</AccordionItem>
          <AccordionItem>ПОДОГРЕВАТЕЛЬ И</AccordionItem>
        </Accordion>
      </Filters>
      <Gallery>
        <NodeCard href="#3230">
          <GearboxThumb />
          <span>
            КОРОБКА ПЕРЕДАЧ
            <br />
            ВЕДУЩЕГО МОСТА (3230)
          </span>
        </NodeCard>
        <NodeCard href="#bevel">
          <BevelThumb />
        </NodeCard>
      </Gallery>
    </PageBody>
  </Page>
);

const NodeModal = () => (
  <Modal role="dialog" aria-labelledby="node-title">
    <ModalHeader>
      <ModalTitle id="node-title">Вузол GM_C201809: ЗАДНЯЯ КРЫШКА И ПОДДОН КАРТЕРА(ZF16) (3824)</ModalTitle>
      <CloseButton aria-label="Закрити">
        <X size={20} strokeWidth={3.5} />
      </CloseButton>
    </ModalHeader>
    <ModalBody>
      <Note>Замітка:</Note>
      <Drawing>
        <PartsDrawing />
      </Drawing>
      <PartsPane>
        <PartsList>
          <PartsTable>
            <tbody>
              {parts.map(([pos, code, name]) => (
                <tr key={code}>
                  <td>{pos}</td>
                  <td>{code}</td>
                  <td>{name}</td>
                  <td>
                    <FindButton>
                      Знайти <FaSearch size={14} />
                    </FindButton>
                  </td>
                </tr>
              ))}
            </tbody>
          </PartsTable>
        </PartsList>
        <PartsScroll />
      </PartsPane>
      <Hints>
        <Hint>
          <MouseIcon />
          -масштабування зображення
        </Hint>
        <Hint>
          <MouseIcon left />
          <MoveIcon />
          - прокрутка картинки
        </Hint>
      </Hints>
      <HintRow>
        <MouseIcon />
      </HintRow>
    </ModalBody>
  </Modal>
);

const Task = () => (
  <TaskBar>
    <TaskButton aria-label="Start">
      <Svg30>
        <path d="M0 0h14v14H0zM16 0h14v14H16zM0 16h14v14H0zM16 16h14v14H16z" fill="url(#win)" />
      </Svg30>
    </TaskButton>
    <TaskButton aria-label="Search">
      <Svg30>
        <circle cx="17" cy="12" r="10" fill="none" stroke="#222" strokeWidth="3" />
        <path d="M10 19L3 28" stroke="#222" strokeWidth="3.5" />
      </Svg30>
    </TaskButton>
    <TaskButton aria-label="Task view">
      <Svg30>
        <path d="M1 8h22v20H1z" fill="#2c2c2c" />
        <path d="M8 1h21v19H8z" fill="#e8efee" opacity=".85" />
      </Svg30>
    </TaskButton>
    <TaskButton aria-label="Weather">
      <Svg30>
        <circle cx="11" cy="16" r="13" fill="url(#sun)" />
      </Svg30>
      <TaskBadge>25°</TaskBadge>
    </TaskButton>
    <TaskButton aria-label="Chat">
      <Svg30>
        <path d="M15 0a15 15 0 1 1-7 28H1l1-8A15 15 0 0 1 15 0z" fill="#6560c8" />
        <path d="M7 9h11v12H7zM19 13l5-4v12l-5-4z" fill="#fff" />
      </Svg30>
    </TaskButton>
    <TaskButton aria-label="Files">
      <Svg30>
        <path d="M0 2h10l3 4h17v22H0z" fill="#dc9a1c" />
        <path d="M0 8h30v20H0z" fill="#fbd05a" />
        <path d="M4 28v-6q0-2 2-2h17q2 0 2 2v6z" fill="#1671c2" />
      </Svg30>
    </TaskButton>
    <TaskButton aria-label="Edge">
      <FaEdge size={30} fill="url(#edge)" />
    </TaskButton>
    <TaskButton aria-label="Store">
      <Svg30>
        <path d="M9 6V1h12v5" fill="none" stroke="#34b3e4" strokeWidth="2" />
        <rect y="5" width="30" height="24" rx="3" fill="#173f6e" />
        <path d="M9 11h6v6H9z" fill="#f25022" />
        <path d="M16 11h6v6h-6z" fill="#7fba00" />
        <path d="M9 18h6v6H9z" fill="#00a4ef" />
        <path d="M16 18h6v6h-6z" fill="#ffb900" />
      </Svg30>
    </TaskButton>
    <TaskButton aria-label="Firefox">
      <Svg30>
        <circle cx="15" cy="16" r="9" fill="#7542d8" />
        <g transform="translate(1 0)">
          <FaFirefoxBrowser size={28} fill="url(#fox)" />
        </g>
      </Svg30>
    </TaskButton>
    <TaskButton aria-label="PG">
      <Svg30>
        <path d="M0 0h30v30H0z" fill="#06254a" />
        <path d="M14 15H7V8q0-2 3-2h4v15M16 15V6h4q3 0 3 3v6h-7M7 18v3l8 5 8-5v-3" fill="none" stroke="#1690a6" strokeWidth="2" />
      </Svg30>
    </TaskButton>
    <TaskButton $active aria-label="Opera GX">
      <OperaIcon size={30} color="#f0486c" />
    </TaskButton>
    <TaskButton aria-label="Calculator">
      <Svg30>
        <rect x="3" width="24" height="30" rx="2" fill="#586778" />
        <path d="M6 3h18v6H6z" fill="#2bb6ea" />
        <path d="M6 11h5v4H6zM13 11h5v4h-5zM19 11h5v4h-5zM6 17h5v4H6zM13 17h5v4h-5zM6 23h5v4H6zM13 23h5v4h-5z" fill="#dfe5ec" />
        <path d="M19 17h5v10h-5z" fill="#12467e" />
      </Svg30>
    </TaskButton>
    <TaskButton $running aria-label="Viber">
      <ViberIcon />
      <TaskBadge $red>91</TaskBadge>
    </TaskButton>
    <TaskButton $running aria-label="Game">
      <Svg30>
        <path d="M5 20Q2 0 16 0q12 0 11 14l-2 8H5z" fill="#3c3020" />
        <path d="M7 15h17l-3 12q-5 5-10 0z" fill="#6c6356" />
        <circle cx="11" cy="16" r="3" fill="#f04848" />
        <circle cx="20" cy="16" r="3" fill="#f04848" />
        <circle cx="15" cy="26" r="3" fill="#333" />
      </Svg30>
    </TaskButton>
    <Tray>
      <ChevronUp size={22} strokeWidth={1.6} />
      <Lang>ENG</Lang>
      <Wifi size={20} strokeWidth={1.8} />
      <Volume2 size={20} strokeWidth={1.6} />
      <Svg20>
        <path d="M5 5h12v11H3v-6" fill="none" stroke="#111" strokeWidth="2" />
        <path d="M7 8h8v6H7zM17 8h3v5h-3zM0 3h6v4H0zM1 0h1v3H1zM4 0h1v3H4z" fill="#111" />
      </Svg20>
      <ClockText>
        11:27
        <br />
        11.08.2022
      </ClockText>
      <Count>4</Count>
    </Tray>
  </TaskBar>
);

const App = () => (
  <Desktop>
    <GlobalStyle />
    <Gradients />
    <Browser>
      <DesktopEdge />
      <Side />
      <Main>
        <Tabs />
        <Address />
        <Viewport>
          <Catalog />
          <PageScroll />
          <ModalShade />
          <NodeModal />
        </Viewport>
      </Main>
    </Browser>
    <Task />
  </Desktop>
);

export default App;
